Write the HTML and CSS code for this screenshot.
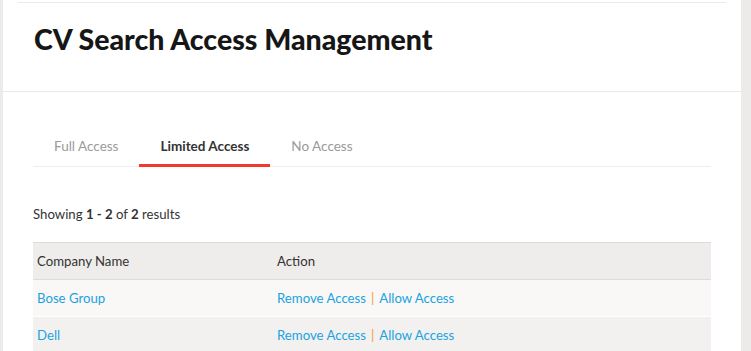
FILE: index.html
```html
<!DOCTYPE html>
<html>
<head>
<meta charset="utf-8">
<link rel="stylesheet" href="styles.css">
</head>
<body>
<div class="page">
  <header class="head">
    <h1 class="title">CV Search Access Management</h1>
  </header>
  <main class="content">
    <nav class="tabs">
      <a class="tab">Full Access</a>
      <a class="tab active">Limited Access</a>
      <a class="tab">No Access</a>
    </nav>
    <p class="count">Showing <b>1 - 2</b> of <b>2</b> results</p>
    <table class="grid">
      <thead>
        <tr><th class="c1">Company Name</th><th>Action</th></tr>
      </thead>
      <tbody>
        <tr><td><a class="link">Bose Group</a></td><td><a class="link">Remove Access</a><span class="sep">|</span><a class="link">Allow Access</a></td></tr>
        <tr><td><a class="link">Dell</a></td><td><a class="link">Remove Access</a><span class="sep">|</span><a class="link">Allow Access</a></td></tr>
      </tbody>
    </table>
  </main>
</div>
</body>
</html>
```
FILE: styles.css
```css
html, body {
  margin: 0;
  padding: 0;
  background: #ecebea;
  height: 100%;
}
body {
  font-family: Lato, "Noto Sans", sans-serif;
  color: #333;
  font-size: 13.2px;
  overflow: hidden;
}
.page {
  margin-left: 3px;
  width: 738px;
  background: #fff;
  min-height: 100%;
}
.head {
  padding-top: 2px;
  border-bottom: 1px solid #eaeaea;
}
.title {
  margin: 0 15px;
  border-top: 1px solid #eaeaea;
  padding: 18px 0 0 16px;
  height: 89px;
  box-sizing: border-box;
  font-size: 28.5px;
  font-weight: 900;
  color: #161616;
  line-height: 36px;
}
.content {
  padding: 36px 30px 0 30px;
}
.tabs {
  display: flex;
  border-bottom: 1px solid #eeeeee;
  height: 38px;
}
.tab {
  padding: 0 21px;
  line-height: 36px;
  font-size: 13.5px;
  color: #9a9a9a;
  border-bottom: 3px solid transparent;
  height: 36px;
}
.tab.active {
  color: #333;
  font-weight: 700;
  border-bottom-color: #f2392b;
}
.count {
  margin: 37px 0 18px 0;
  line-height: 20px;
  color: #333;
}
.grid {
  width: 678px;
  border-collapse: collapse;
}
.grid th {
  text-align: left;
  font-weight: 400;
  background: #eeedeb;
  border-top: 1px solid #dedcda;
  border-bottom: 1px solid #dedcda;
  height: 36px;
  padding: 0 4px;
  color: #333;
}
.grid th.c1 {
  width: 232px;
}
.grid td {
  height: 36px;
  padding: 0 4px;
  background: #f9f8f7;
  border-bottom: 1px solid #fff;
}
.grid tbody tr:nth-child(2) td {
  background: #f2f1f0;
}
.link {
  color: #1ba3e0;
}
.sep {
  color: #f0a030;
  margin: 0 5px;
}
```
